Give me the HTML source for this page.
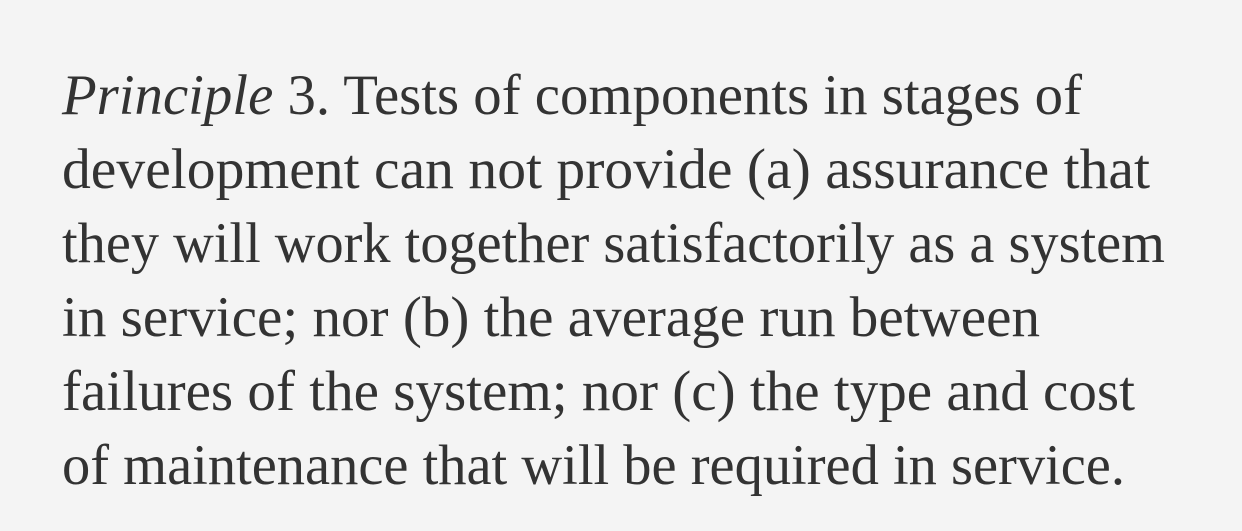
<!DOCTYPE html>
<html><head><meta charset="utf-8"><style>
html,body{margin:0;padding:0;background:#f4f4f4;}
svg{display:block}
text{font-family:"Liberation Serif",serif;font-size:57px;fill:#333;}
</style></head><body>
<svg width="1242" height="531" viewBox="0 0 1242 531">
<rect width="1242" height="531" fill="#f4f4f4"/>
<text x="62" y="114" textLength="1020" lengthAdjust="spacingAndGlyphs"><tspan font-style="italic">Principle</tspan> 3. Tests of components in stages of</text>
<text x="62" y="188" textLength="1088" lengthAdjust="spacingAndGlyphs">development can not provide (a) assurance that</text>
<text x="62" y="262" textLength="1103" lengthAdjust="spacingAndGlyphs">they will work together satisfactorily as a system</text>
<text x="62" y="336" textLength="978" lengthAdjust="spacingAndGlyphs">in service; nor (b) the average run between</text>
<text x="62" y="410" textLength="1073" lengthAdjust="spacingAndGlyphs">failures of the system; nor (c) the type and cost</text>
<text x="62" y="484" textLength="1063" lengthAdjust="spacingAndGlyphs">of maintenance that will be required in service.</text>
</svg>
</body></html>
